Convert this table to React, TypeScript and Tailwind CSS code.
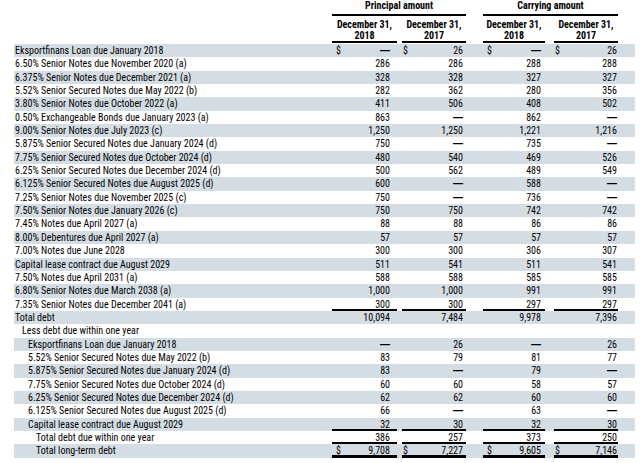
type Row = {
  label: string;
  indent?: number;
  values?: string[];
  dollar?: boolean;
  rule?: "single" | "thick";
};

const D = "—";

const rows: Row[] = [
  { label: "Eksportfinans Loan due January 2018", values: [D, "26", D, "26"], dollar: true },
  { label: "6.50% Senior Notes due November 2020 (a)", values: ["286", "286", "288", "288"] },
  { label: "6.375% Senior Notes due December 2021 (a)", values: ["328", "328", "327", "327"] },
  { label: "5.52% Senior Secured Notes due May 2022 (b)", values: ["282", "362", "280", "356"] },
  { label: "3.80% Senior Notes due October 2022 (a)", values: ["411", "506", "408", "502"] },
  { label: "0.50% Exchangeable Bonds due January 2023 (a)", values: ["863", D, "862", D] },
  { label: "9.00% Senior Notes due July 2023 (c)", values: ["1,250", "1,250", "1,221", "1,216"] },
  { label: "5.875% Senior Secured Notes due January 2024 (d)", values: ["750", D, "735", D] },
  { label: "7.75% Senior Secured Notes due October 2024 (d)", values: ["480", "540", "469", "526"] },
  { label: "6.25% Senior Secured Notes due December 2024 (d)", values: ["500", "562", "489", "549"] },
  { label: "6.125% Senior Secured Notes due August 2025 (d)", values: ["600", D, "588", D] },
  { label: "7.25% Senior Notes due November 2025 (c)", values: ["750", D, "736", D] },
  { label: "7.50% Senior Notes due January 2026 (c)", values: ["750", "750", "742", "742"] },
  { label: "7.45% Notes due April 2027 (a)", values: ["88", "88", "86", "86"] },
  { label: "8.00% Debentures due April 2027 (a)", values: ["57", "57", "57", "57"] },
  { label: "7.00% Notes due June 2028", values: ["300", "300", "306", "307"] },
  { label: "Capital lease contract due August 2029", values: ["511", "541", "511", "541"] },
  { label: "7.50% Notes due April 2031 (a)", values: ["588", "588", "585", "585"] },
  { label: "6.80% Senior Notes due March 2038 (a)", values: ["1,000", "1,000", "991", "991"] },
  { label: "7.35% Senior Notes due December 2041 (a)", values: ["300", "300", "297", "297"], rule: "single" },
  { label: "Total debt", values: ["10,094", "7,484", "9,978", "7,396"] },
  { label: "Less debt due within one year", indent: 1 },
  { label: "Eksportfinans Loan due January 2018", indent: 2, values: [D, "26", D, "26"] },
  { label: "5.52% Senior Secured Notes due May 2022 (b)", indent: 2, values: ["83", "79", "81", "77"] },
  { label: "5.875% Senior Secured Notes due January 2024 (d)", indent: 2, values: ["83", D, "79", D] },
  { label: "7.75% Senior Secured Notes due October 2024 (d)", indent: 2, values: ["60", "60", "58", "57"] },
  { label: "6.25% Senior Secured Notes due December 2024 (d)", indent: 2, values: ["62", "62", "60", "60"] },
  { label: "6.125% Senior Secured Notes due August 2025 (d)", indent: 2, values: ["66", D, "63", D] },
  { label: "Capital lease contract due August 2029", indent: 2, values: ["32", "30", "32", "30"], rule: "single" },
  { label: "Total debt due within one year", indent: 3, values: ["386", "257", "373", "250"], rule: "single" },
  { label: "Total long-term debt", indent: 3, values: ["9,708", "7,227", "9,605", "7,146"], dollar: true, rule: "thick" },
];

// column boxes: width, left gap, right padding of the figure
const cols = [
  "w-[65px] pr-[7px]",
  "ml-[5px] w-[64px] pr-[3px]",
  "ml-[17px] w-[62px] pr-[4px]",
  "ml-[9px] w-[64px] pr-[1px]",
];

const indents = ["pl-[1px]", "pl-[8px]", "pl-[14px]", "pl-[22px]"];

const ruleClass = {
  single: "border-b-2 border-black",
  thick: "border-b-[3px] border-black",
};

const SubHead = ({ year, className }: { year: string; className: string }) => (
  <div className={`${className} h-[27px] border-b-2 border-black pt-[3px] text-center leading-[11px] whitespace-nowrap`}>
    <div>December 31,</div>
    <div>{year}</div>
  </div>
);

export default function App() {
  return (
    <div className="w-[640px] h-[463px] overflow-hidden bg-white pl-[14px] text-[10px] text-black font-[family-name:Roboto,'Liberation_Sans',sans-serif] [font-stretch:77%]">
      {/* ── En-têtes ── */}
      <div className="flex font-bold">
        <div className="w-[318px]" />
        <div className="w-[134px] h-[16px] border-b-2 border-black text-center leading-[12px]">
          Principal amount
        </div>
        <div className="ml-[17px] w-[135px] h-[16px] border-b-2 border-black text-center leading-[12px]">
          Carrying amount
        </div>
      </div>
      <div className="flex font-bold mb-[1px]">
        <div className="w-[318px]" />
        <SubHead year="2018" className="w-[65px]" />
        <SubHead year="2017" className="ml-[5px] w-[64px]" />
        <SubHead year="2018" className="ml-[17px] w-[62px]" />
        <SubHead year="2017" className="ml-[9px] w-[64px]" />
      </div>

      {/* ── Lignes ── */}
      <div className="w-[621px]">
        {rows.map((row, i) => (
          <div
            key={i}
            className={`flex h-[13.35px] leading-[13px] ${i % 2 === 0 ? "bg-[#d5dde4]" : "bg-white"}`}
          >
            <div className={`w-[318px] whitespace-nowrap ${indents[row.indent ?? 0]}`}>{row.label}</div>
            {row.values &&
              row.values.map((v, c) => (
                <div
                  key={c}
                  className={`flex justify-between ${cols[c]} ${row.rule ? ruleClass[row.rule] : ""}`}
                >
                  <span className={c === 0 || c === 2 ? "pl-[4px]" : "pl-[1px]"}>{row.dollar ? "$" : ""}</span>
                  {v === D ? (
                    <span className="font-[family-name:'Liberation_Sans',sans-serif] font-bold">{v}</span>
                  ) : (
                    <span>{v}</span>
                  )}
                </div>
              ))}
          </div>
        ))}
      </div>
    </div>
  );
}
